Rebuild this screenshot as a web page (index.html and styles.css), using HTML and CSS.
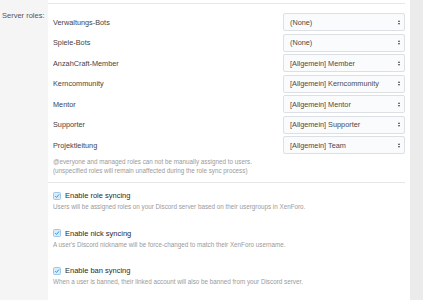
FILE: index.html
```html
<!DOCTYPE html>
<html>
<head>
<meta charset="utf-8">
<link rel="stylesheet" href="styles.css">
</head>
<body>
<div class="page">
  <div class="side"><div class="side-label">Server roles:</div></div>
  <div class="main">
    <div class="panel">
      <div class="roles">
        <div class="row"><span class="name">Verwaltungs-Bots</span><div class="select"><span>(None)</span><span class="arrows"><i class="up"></i><i class="down"></i></span></div></div>
        <div class="row"><span class="name">Spiele-Bots</span><div class="select"><span>(None)</span><span class="arrows"><i class="up"></i><i class="down"></i></span></div></div>
        <div class="row"><span class="name">AnzahCraft-Member</span><div class="select"><span>[Allgemein] Member</span><span class="arrows"><i class="up"></i><i class="down"></i></span></div></div>
        <div class="row"><span class="name">Kerncommunity</span><div class="select"><span>[Allgemein] Kerncommunity</span><span class="arrows"><i class="up"></i><i class="down"></i></span></div></div>
        <div class="row"><span class="name">Mentor</span><div class="select"><span>[Allgemein] Mentor</span><span class="arrows"><i class="up"></i><i class="down"></i></span></div></div>
        <div class="row"><span class="name">Supporter</span><div class="select"><span>[Allgemein] Supporter</span><span class="arrows"><i class="up"></i><i class="down"></i></span></div></div>
        <div class="row"><span class="name">Projektleitung</span><div class="select"><span>[Allgemein] Team</span><span class="arrows"><i class="up"></i><i class="down"></i></span></div></div>
        <p class="hint">@everyone and managed roles can not be manually assigned to users.<br>(unspecified roles will remain unaffected during the role sync process)</p>
      </div>
      <div class="options">
        <div class="opt">
          <label class="check"><span class="box"><svg viewBox="0 0 10 10" width="8" height="8"><path d="M2 5.2 L4.2 7.4 L8.4 2.4" fill="none" stroke="#2f8fd8" stroke-width="1.6"/></svg></span>Enable role syncing</label>
          <p class="hint">Users will be assigned roles on your Discord server based on their usergroups in XenForo.</p>
        </div>
        <div class="opt">
          <label class="check"><span class="box"><svg viewBox="0 0 10 10" width="8" height="8"><path d="M2 5.2 L4.2 7.4 L8.4 2.4" fill="none" stroke="#2f8fd8" stroke-width="1.6"/></svg></span>Enable nick syncing</label>
          <p class="hint">A user's Discord nickname will be force-changed to match their XenForo username.</p>
        </div>
        <div class="opt">
          <label class="check"><span class="box"><svg viewBox="0 0 10 10" width="8" height="8"><path d="M2 5.2 L4.2 7.4 L8.4 2.4" fill="none" stroke="#2f8fd8" stroke-width="1.6"/></svg></span>Enable ban syncing</label>
          <p class="hint">When a user is banned, their linked account will also be banned from your Discord server.</p>
        </div>
      </div>
    </div>
  </div>
  <div class="strip"></div>
</div>
</body>
</html>
```
FILE: styles.css
```css
html, body { margin: 0; padding: 0; }
body {
  font-family: "Liberation Sans", Arial, sans-serif;
  font-size: 7.3px;
  color: #454545;
  background: #ebebeb;
}
.page { display: flex; height: 300px; overflow: hidden; }
.side { width: 48px; background: #f5f5f5; }
.side-label { padding: 11px 0 0 2px; font-size: 7.5px; color: #555; line-height: 9px; }
.main { width: 362px; background: #fff; padding: 3px 5px 0 0; box-sizing: border-box; }
.strip { flex: 1; background: #ebebeb; }
.panel { border-top: 1px solid #e7e7e7; }
.roles { padding: 9px 0 7px 5px; border-bottom: 1px solid #e7e7e7; }
.row { display: flex; justify-content: space-between; align-items: center; height: 18px; margin-bottom: 2.5px; }
.name { color: #444; }
.select {
  width: 122px; height: 18px; box-sizing: border-box;
  border: 1px solid #dcdfe3; border-radius: 2px;
  background: #f9fbfd;
  display: flex; align-items: center; justify-content: space-between;
  padding: 0 4px 0 6px; color: #4a4a4a;
}
.arrows { display: flex; flex-direction: column; gap: 1px; }
.arrows i { display: block; width: 0; height: 0; border-left: 1.5px solid transparent; border-right: 1.5px solid transparent; }
.arrows .up { border-bottom: 2px solid #444; }
.arrows .down { border-top: 2px solid #444; }
.hint { margin: 0; font-size: 6.3px; line-height: 9px; color: #9a9a9a; }
.roles .hint { margin-top: 1px; }
.options { padding: 8px 0 5px 5px; border-bottom: 1px solid #e7e7e7; }
.opt { height: 37.5px; }
.check { display: flex; align-items: center; height: 10px; font-size: 7.5px; color: #2a2a2a; gap: 4px; }
.box { width: 8px; height: 8px; box-sizing: border-box; border: 1px solid #9cc7ea; background: #d9ecfa; border-radius: 1.5px; display: flex; align-items: center; justify-content: center; }
.box svg { display: block; }
.opt .hint { margin-top: 1.5px; }
```
